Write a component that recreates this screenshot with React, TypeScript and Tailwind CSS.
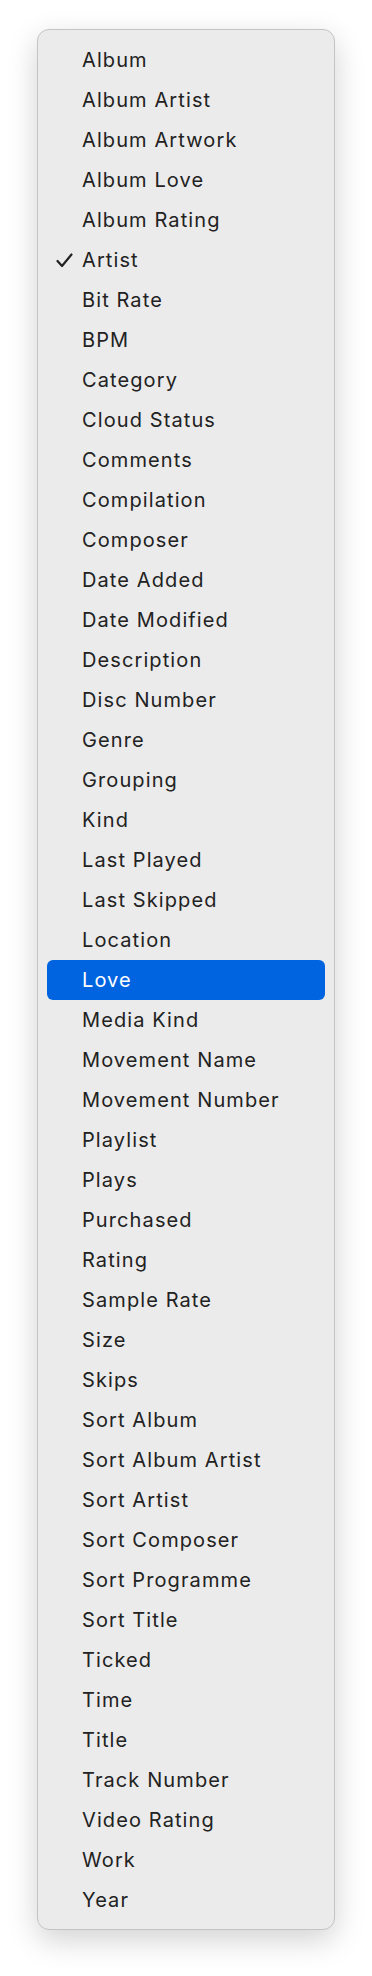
import React from "react";

const items = [
  "Album","Album Artist","Album Artwork","Album Love","Album Rating","Artist","Bit Rate","BPM","Category","Cloud Status","Comments","Compilation","Composer","Date Added","Date Modified","Description","Disc Number","Genre","Grouping","Kind","Last Played","Last Skipped","Location","Love","Media Kind","Movement Name","Movement Number","Playlist","Plays","Purchased","Rating","Sample Rate","Size","Skips","Sort Album","Sort Album Artist","Sort Artist","Sort Composer","Sort Programme","Sort Title","Ticked","Time","Title","Track Number","Video Rating","Work","Year",
];

export default function App() {
  return (
    <div className="min-h-[1976px] w-[372px] bg-white pt-[29px] pl-[37px]" style={{ fontFamily: "Inter, 'Noto Sans', sans-serif" }}>
      <div className="w-[298px] rounded-[12px] border border-[#c4c4c4] bg-[#ebebeb] pt-[10px] pb-[9px] shadow-[0_10px_30px_rgba(0,0,0,0.18)]">
        {items.map((it) => {
          const selected = it === "Love";
          const checked = it === "Artist";
          return (
            <div
              key={it}
              className={`mx-[9px] flex h-[40px] items-center rounded-[6px] ${selected ? "bg-[#0064e0] text-white" : "text-[#222222]"}`}
            >
              <div className="flex w-[35px] shrink-0 items-center pl-[9px]">
                {checked && (
                  <svg width="17" height="15" viewBox="0 0 17 15" fill="none">
                    <path d="M1.5 8 L6 13 L15.5 1.5" stroke="#222222" strokeWidth="2.2" strokeLinecap="round" strokeLinejoin="round" />
                  </svg>
                )}
              </div>
              <span className="text-[20px] leading-none tracking-[1.1px]">{it}</span>
            </div>
          );
        })}
      </div>
    </div>
  );
}
